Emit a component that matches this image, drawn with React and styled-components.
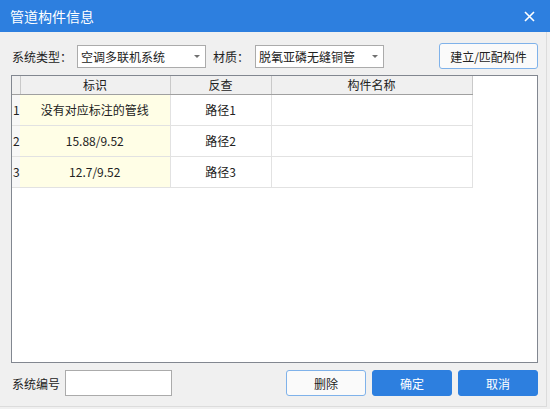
import React from "react";
import styled, { createGlobalStyle } from "styled-components";

const GlobalStyle = createGlobalStyle`
  html, body {
    margin: 0;
    padding: 0;
    background: #f0f0f0;
  }
  * {
    box-sizing: border-box;
  }
`;

const Window = styled("div")`
  width: 550px;
  height: 409px;
  display: flex;
  flex-direction: column;
  font-family: "Noto Sans CJK SC", "Microsoft YaHei", sans-serif;
  font-size: 12px;
  color: #222;
  background: #f0f0f0;
`;

const TitleBar = styled("div")`
  height: 32px;
  flex: none;
  display: flex;
  align-items: center;
  justify-content: space-between;
  padding: 0 14px 0 10px;
  background: #2d7fdf;
  color: #fff;
  font-size: 14px;
`;

const CloseButton = styled("button")`
  border: 0;
  background: transparent;
  padding: 0;
  width: 14px;
  height: 14px;
  display: flex;
  align-items: center;
  justify-content: center;
  cursor: pointer;
`;

const Body = styled("div")`
  flex: 1;
  display: flex;
  flex-direction: column;
  width: 547px;
  padding: 11px 8px 0 11px;
  margin-bottom: 2px;
  border-right: 1px solid #dcdcdc;
  border-bottom: 1px solid #dcdcdc;
`;

const Toolbar = styled("div")`
  display: flex;
  align-items: center;
  height: 26px;
`;

const Label = styled("span")`
  white-space: nowrap;
  margin-right: ${(p) => p.gap || 0}px;
  margin-left: ${(p) => p.offset || 0}px;
`;

const Select = styled("div")`
  width: 129px;
  height: 23px;
  display: flex;
  align-items: center;
  justify-content: space-between;
  padding: 0 5px 0 3px;
  background: #fff;
  border: 1px solid #ababab;
  font-size: 12px;
`;

const Arrow = styled("span")`
  width: 0;
  height: 0;
  border-left: 3px solid transparent;
  border-right: 3px solid transparent;
  border-top: 3px solid #707070;
`;

const Spacer = styled("div")`
  flex: 1;
`;

const OutlineButton = styled("button")`
  width: ${(p) => p.w}px;
  height: 26px;
  border: 1px solid #7fb2ea;
  border-radius: 3px;
  background: #fafafa;
  color: #222;
  font-family: inherit;
  font-size: 12px;
  padding: 0;
`;

const PrimaryButton = styled(OutlineButton)`
  border-color: #2d7fdf;
  background: #2d7fdf;
  color: #fff;
`;

const GridBox = styled("div")`
  margin-top: 6px;
  height: 288px;
  border: 1px solid #828790;
  background: #fff;
  overflow: hidden;
`;

const Table = styled("table")`
  border-collapse: collapse;
  table-layout: fixed;
  width: 460px;
`;

const HeadCell = styled("th")`
  height: 18px;
  padding: 0;
  font-weight: 400;
  background: #f0f0f0;
  border-right: 1px solid #c9c9c9;
  border-bottom: 1px solid #a0a0a0;
  text-align: center;
  line-height: 16px;
`;

const RowNum = styled("td")`
  height: 31px;
  padding: 0 0 0 1px;
  background: #f7f7f7;
  border-bottom: 1px solid #e2e2e2;
  text-align: left;
`;

const Cell = styled("td")`
  padding: 0;
  text-align: center;
  background: ${(p) => (p.marked ? "#fffee6" : "#fff")};
  border-right: 1px solid #e2e2e2;
  border-bottom: 1px solid #e2e2e2;
`;

const Footer = styled("div")`
  display: flex;
  align-items: center;
  gap: 6px;
  margin-top: 7px;
  height: 26px;
`;

const TextInput = styled("input")`
  width: 107px;
  height: 26px;
  margin-left: -1px;
  border: 1px solid #ababab;
  background: #fff;
  font-family: inherit;
  padding: 0 3px;
`;

const rows = [
  { id: 1, mark: "没有对应标注的管线", check: "路径1" },
  { id: 2, mark: "15.88/9.52", check: "路径2" },
  { id: 3, mark: "12.7/9.52", check: "路径3" },
];

const App = () => {
  return (
    <Window>
      <GlobalStyle />
      <TitleBar>
        <span>管道构件信息</span>
        <CloseButton aria-label="关闭">
          <svg width="11" height="11" viewBox="0 0 11 11">
            <path d="M1 1L10 10M10 1L1 10" stroke="#fff" strokeWidth="1.6" />
          </svg>
        </CloseButton>
      </TitleBar>
      <Body>
        <Toolbar>
          <Label offset={1} gap={5}>系统类型：</Label>
          <Select>
            <span>空调多联机系统</span>
            <Arrow />
          </Select>
          <Label offset={7} gap={6}>材质：</Label>
          <Select>
            <span>脱氧亚磷无缝铜管</span>
            <Arrow />
          </Select>
          <Spacer />
          <OutlineButton w={99}>建立/匹配构件</OutlineButton>
        </Toolbar>
        <GridBox>
          <Table>
            <colgroup>
              <col style={{ width: 8 }} />
              <col style={{ width: 150 }} />
              <col style={{ width: 101 }} />
              <col style={{ width: 201 }} />
            </colgroup>
            <thead>
              <tr>
                <HeadCell />
                <HeadCell>标识</HeadCell>
                <HeadCell>反查</HeadCell>
                <HeadCell>构件名称</HeadCell>
              </tr>
            </thead>
            <tbody>
              {rows.map((r) => (
                <tr key={r.id}>
                  <RowNum>{r.id}</RowNum>
                  <Cell marked>{r.mark}</Cell>
                  <Cell>{r.check}</Cell>
                  <Cell />
                </tr>
              ))}
            </tbody>
          </Table>
        </GridBox>
        <Footer>
          <Label offset={1}>系统编号</Label>
          <TextInput />
          <Spacer />
          <OutlineButton w={80}>删除</OutlineButton>
          <PrimaryButton w={80}>确定</PrimaryButton>
          <PrimaryButton w={80}>取消</PrimaryButton>
        </Footer>
      </Body>
    </Window>
  );
};

export default App;
